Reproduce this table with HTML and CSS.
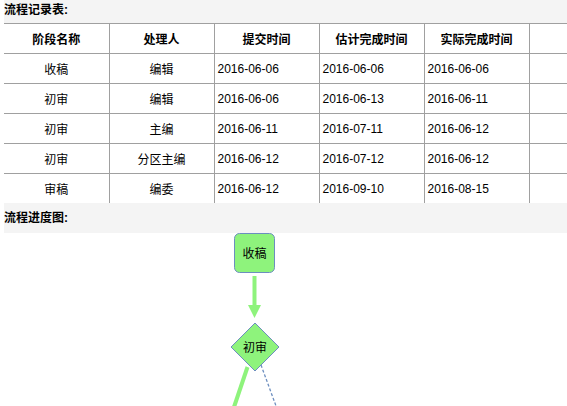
FILE: index.html
```html
<!DOCTYPE html>
<html lang="zh">
<head>
<meta charset="utf-8">
<title>流程</title>
<link rel="stylesheet" href="styles.css">
</head>
<body>
<div class="page">
  <div class="bar bar-first">流程记录表:</div>
  <table class="grid">
    <colgroup>
      <col><col><col><col><col><col><col>
    </colgroup>
    <thead>
      <tr>
        <th>阶段名称</th><th>处理人</th><th>提交时间</th><th>估计完成时间</th><th>实际完成时间</th><th></th><th></th>
      </tr>
    </thead>
    <tbody>
      <tr><td class="c">收稿</td><td class="c">编辑</td><td>2016-06-06</td><td>2016-06-06</td><td>2016-06-06</td><td></td><td></td></tr>
      <tr><td class="c">初审</td><td class="c">编辑</td><td>2016-06-06</td><td>2016-06-13</td><td>2016-06-11</td><td></td><td></td></tr>
      <tr><td class="c">初审</td><td class="c">主编</td><td>2016-06-11</td><td>2016-07-11</td><td>2016-06-12</td><td></td><td></td></tr>
      <tr><td class="c">初审</td><td class="c">分区主编</td><td>2016-06-12</td><td>2016-07-12</td><td>2016-06-12</td><td></td><td></td></tr>
      <tr><td class="c">审稿</td><td class="c">编委</td><td>2016-06-12</td><td>2016-09-10</td><td>2016-08-15</td><td></td><td></td></tr>
    </tbody>
  </table>
  <div class="bar">流程进度图:</div>
  <div class="diagram">
    <svg width="563" height="180" viewBox="4 233 563 180" xmlns="http://www.w3.org/2000/svg">
      <rect x="234.5" y="233.5" width="40" height="39" rx="5" ry="5" fill="#8ef37c" stroke="#6c8ebf" stroke-width="1"/>
      <text x="254.5" y="257.5" text-anchor="middle" class="node-text">收稿</text>
      <line x1="254.5" y1="276" x2="254.5" y2="306" stroke="#8ef37c" stroke-width="4"/>
      <polygon points="248,305 261,305 254.5,318" fill="#8ef37c"/>
      <polygon points="255,323 279,347 255,371 231,347" fill="#8ef37c" stroke="#6c8ebf" stroke-width="1"/>
      <text x="255" y="351.5" text-anchor="middle" class="node-text">初审</text>
      <line x1="247.5" y1="367" x2="233" y2="410" stroke="#8ef37c" stroke-width="4"/>
      <line x1="261" y1="365" x2="277.5" y2="410" stroke="#6c8ebf" stroke-width="1.3" stroke-dasharray="3,2"/>
    </svg>
  </div>
</div>
</body>
</html>
```
FILE: styles.css
```css
html, body {
  margin: 0;
  padding: 0;
  background: #ffffff;
  overflow: hidden;
}
body {
  font-family: "Liberation Sans", "Noto Sans CJK SC", Arial, sans-serif;
  font-size: 12px;
  color: #000;
}
.page {
  padding-left: 4px;
  width: 800px;
}
.bar {
  background: #f4f4f4;
  height: 30px;
  line-height: 30px;
  font-weight: bold;
  font-size: 12px;
  white-space: nowrap;
}
.bar-first {
  height: 23px;
  line-height: 20px;
}
.grid {
  border-collapse: collapse;
  table-layout: fixed;
  width: 735px;
}
.grid col {
  width: 105px;
}
.grid th,
.grid td {
  height: 29px;
  padding: 0 0 0 3px;
  border-top: 1px solid #a0a0a0;
  border-left: 1px solid #a0a0a0;
  text-align: left;
  white-space: nowrap;
  font-size: 12px;
}
.grid th {
  font-weight: bold;
  text-align: center;
  padding: 0;
}
.grid td.c {
  text-align: center;
  padding: 0;
}
.grid th:first-child,
.grid td:first-child {
  border-left: none;
}
.diagram {
  height: 180px;
}
.diagram svg {
  display: block;
}
.node-text {
  font-family: "Noto Sans CJK SC", sans-serif;
  font-size: 12px;
  fill: #000;
}
```
